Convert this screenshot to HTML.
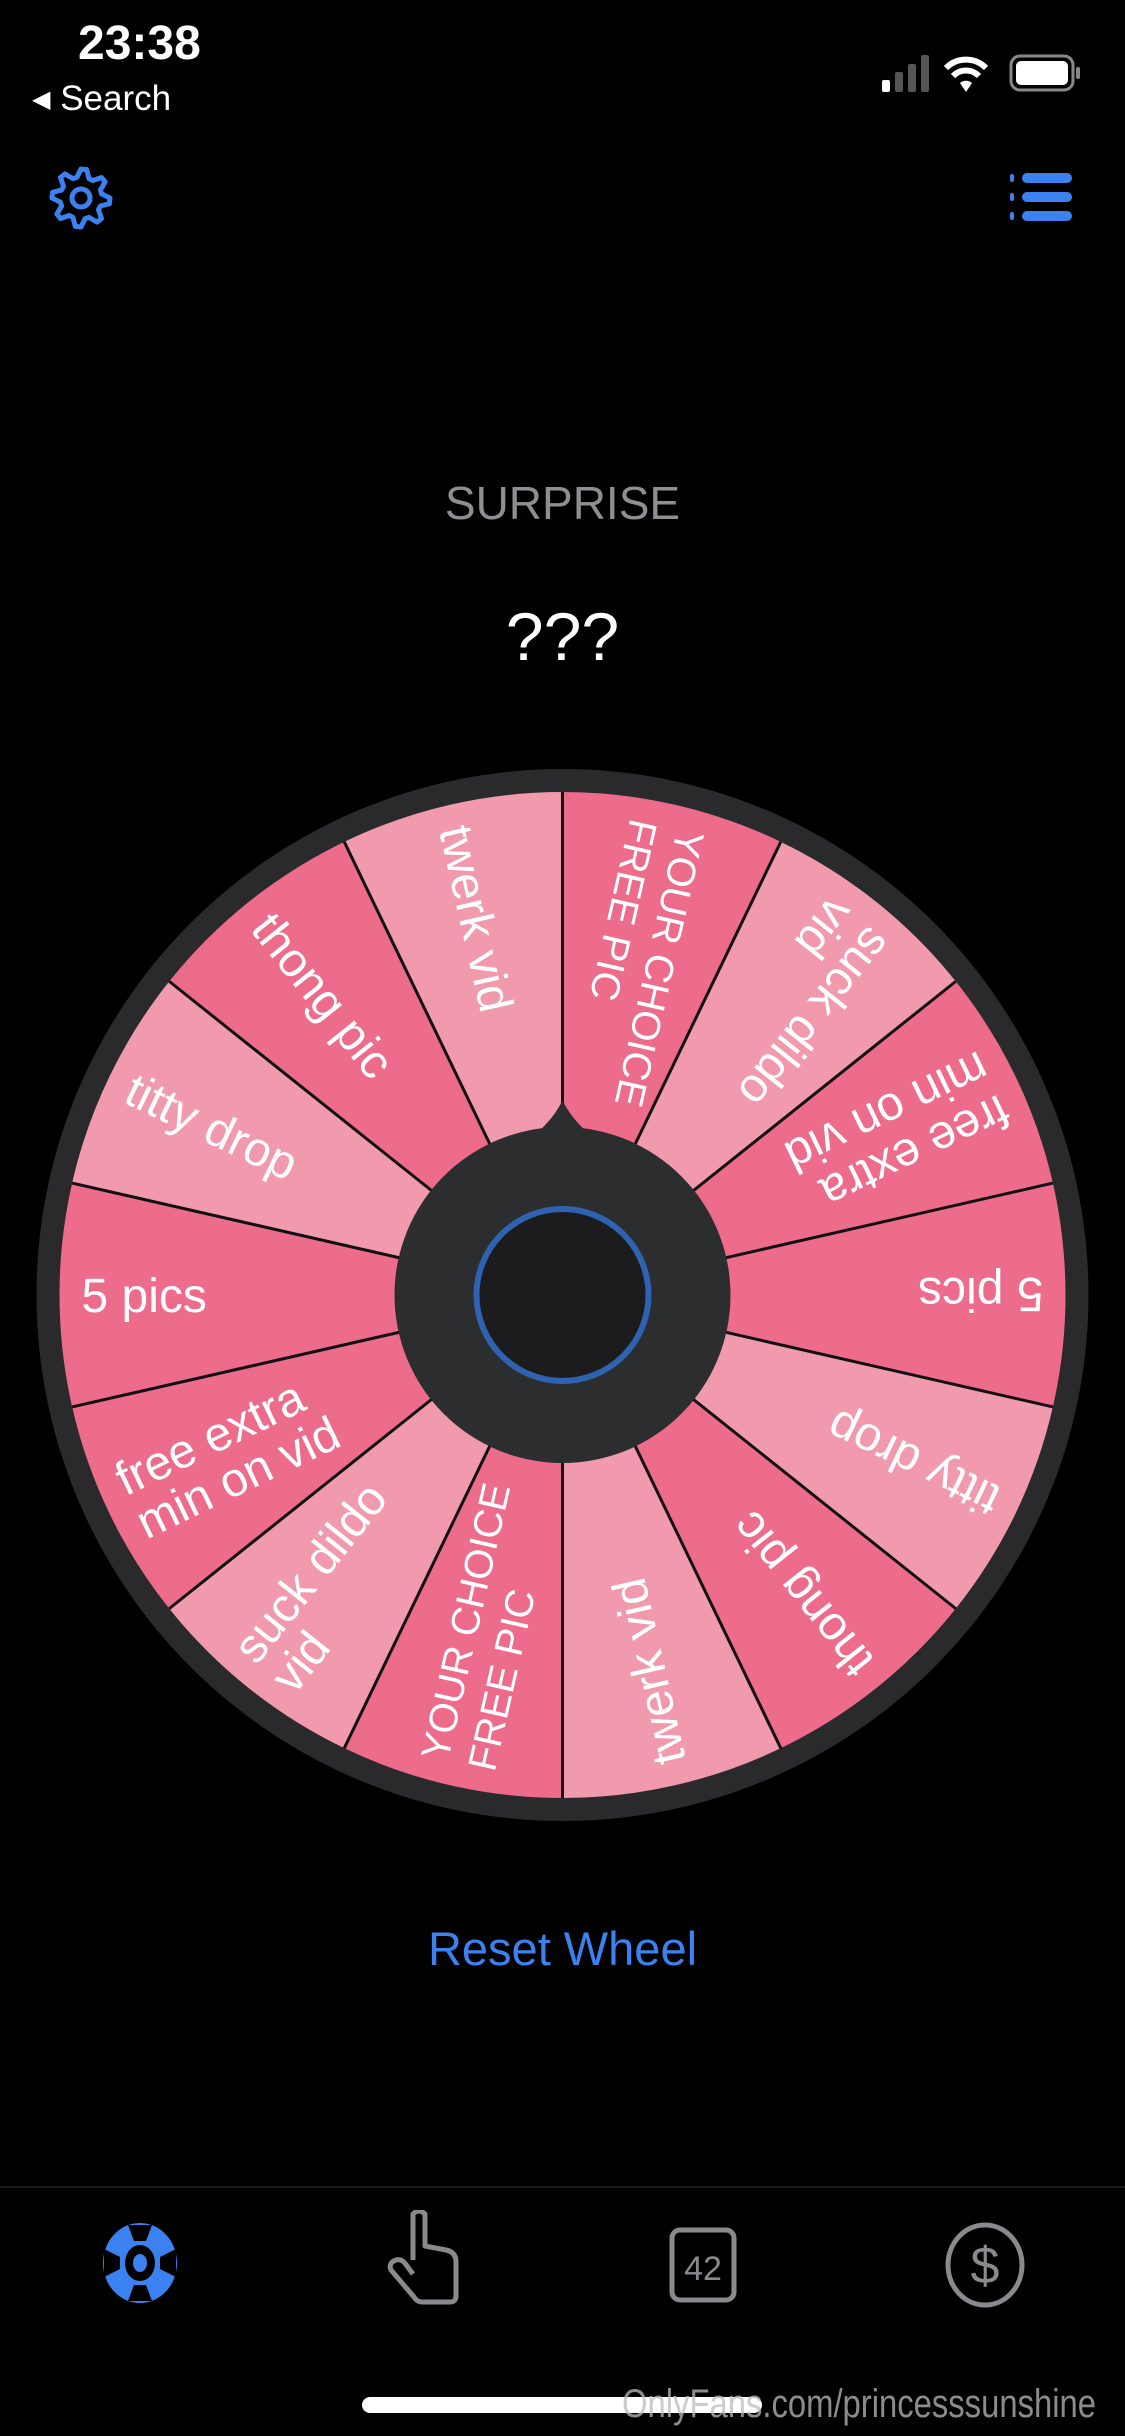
<!DOCTYPE html>
<html><head><meta charset="utf-8">
<style>
html,body{margin:0;padding:0;background:#000;}
body{width:1125px;height:2436px;position:relative;overflow:hidden;font-family:"Liberation Sans",sans-serif;}
.abs{position:absolute;}
</style></head>
<body>
<div class="abs" style="left:78px;top:16px;color:#fff;font-size:48px;font-weight:bold;">23:38</div>
<div class="abs" style="left:32px;top:79px;color:#fff;font-size:35px;"><span style="font-size:24px;position:relative;top:-3px;">◀</span> Search</div>
<svg class="abs" style="left:880px;top:50px" width="210" height="45" viewBox="0 0 210 45">
 <rect x="2" y="30" width="8" height="12" rx="2" fill="#fff"/>
 <rect x="15" y="22" width="8" height="20" rx="2" fill="#555"/>
 <rect x="28" y="14" width="8" height="28" rx="2" fill="#555"/>
 <rect x="41" y="5" width="8" height="37" rx="2" fill="#555"/>
 <path d="M66 18 A28 28 0 0 1 106 18" stroke="#fff" stroke-width="6" fill="none"/>
 <path d="M73 26 A18 18 0 0 1 99 26" stroke="#fff" stroke-width="6" fill="none"/>
 <path d="M80 33 L86 42 L92 33 A9 9 0 0 0 80 33Z" fill="#fff"/>
 <rect x="131" y="6" width="62" height="34" rx="9" fill="none" stroke="#888" stroke-width="3"/>
 <rect x="136" y="11" width="52" height="24" rx="5" fill="#fff"/>
 <rect x="196" y="17" width="4" height="12" rx="2" fill="#888"/>
</svg>
<svg class="abs" style="left:46px;top:162px" width="70" height="72" viewBox="-35 -36 70 72">
 <g fill="none" stroke="#3b82f0" stroke-width="5" stroke-linejoin="round">
 <path id="g" d=""/>
 <circle r="9"/>
 </g>
</svg>
<svg class="abs" style="left:1008px;top:170px" width="66" height="56" viewBox="0 0 66 56">
 <g fill="#3b82f0"><rect x="2" y="4" width="4" height="8" rx="2"/><rect x="14" y="3" width="50" height="10" rx="5"/>
 <rect x="2" y="23" width="4" height="8" rx="2"/><rect x="14" y="22" width="50" height="10" rx="5"/>
 <rect x="2" y="42" width="4" height="8" rx="2"/><rect x="14" y="41" width="50" height="10" rx="5"/></g>
</svg>
<div class="abs" style="left:0;width:1125px;top:476px;text-align:center;color:#8e8e93;font-size:46px;">SURPRISE</div>
<div class="abs" style="left:0;width:1125px;top:598px;text-align:center;color:#fff;font-size:68px;">???</div>

<svg id="wheel" class="abs" style="left:0;top:0" width="1125" height="2000"></svg>

<div class="abs" style="left:0;width:1125px;top:1921px;text-align:center;color:#3b82f0;font-size:47px;">Reset Wheel</div>
<div class="abs" style="left:0;top:2186px;width:1125px;height:2px;background:#1c1c1e;"></div>
<svg class="abs" style="left:0;top:2210px" width="1125" height="110" viewBox="0 0 1125 110">
 <g transform="translate(140,53)">
  <ellipse rx="37" ry="40" fill="#3b82f0"/>
  <g fill="#000">
   <path d="M-12 -38 L12 -38 L6 -22 L-6 -22Z"/>
   <path d="M-12 38 L12 38 L6 22 L-6 22Z"/>
   <path d="M-36 -14 L-36 14 L-20 6 L-20 -6Z"/>
   <path d="M36 -14 L36 14 L20 6 L20 -6Z"/>
   <ellipse rx="15" ry="18"/>
  </g>
  <ellipse rx="7" ry="9" fill="#3b82f0"/>
 </g>
 <path d="M413 50 L413 4 Q419 -2 425 4 L425 36 L446 40 Q456 42 456 52 L456 86 Q456 92 450 92 L422 92 Q417 92 414 87 L391 60 Q388 53 396 50 Q402 48 407 56 L413 64" fill="none" stroke="#8a8a8e" stroke-width="5" stroke-linejoin="round"/>
 <rect x="672" y="20" width="62" height="70" rx="8" fill="none" stroke="#8a8a8e" stroke-width="5"/>
 <text x="703" y="70" text-anchor="middle" fill="#8a8a8e" font-size="34" font-family="Liberation Sans">42</text>
 <ellipse cx="985" cy="55" rx="37" ry="40" fill="none" stroke="#8a8a8e" stroke-width="5"/>
 <text x="985" y="73" text-anchor="middle" fill="#8a8a8e" font-size="52" font-family="Liberation Sans">$</text>
</svg>
<div class="abs" style="left:362px;top:2397px;width:400px;height:16px;border-radius:8px;background:#fff;"></div>
<div class="abs" style="left:622px;top:2382px;color:#bbb;opacity:.75;font-size:40px;white-space:nowrap;transform-origin:0 0;transform:scaleX(0.82);">OnlyFans.com/princesssunshine</div>

<script>
(function(){var d="",n=8,ro=29,ri=21;for(var i=0;i<n*4;i++){var a=(i/(n*4))*2*Math.PI-Math.PI/2;var r=(i%4<2)?ro:ri;var x=Math.cos(a)*r,y=Math.sin(a)*r;d+=(i?"L":"M")+x.toFixed(1)+" "+y.toFixed(1);}document.getElementById("g").setAttribute("d",d+"Z");})();
var W=document.getElementById("wheel");
var cx=562.5,cy=1295,R=503;
var items=[["YOUR CHOICE","FREE PIC",0],["suck dildo","vid",1],["free extra","min on vid",0],["5 pics","",0],["titty drop","",1],["thong pic","",0],["twerk vid","",1],
["YOUR CHOICE","FREE PIC",0],["suck dildo","vid",1],["free extra","min on vid",0],["5 pics","",0],["titty drop","",1],["thong pic","",0],["twerk vid","",1]];
var h='<circle cx="'+cx+'" cy="'+cy+'" r="526" fill="#2a2a2c"/>';
var N=14,st=360/N;
function pt(deg,r){var a=deg*Math.PI/180;return [cx+Math.sin(a)*r,cy-Math.cos(a)*r];}
for(var i=0;i<N;i++){var a0=i*st,a1=(i+1)*st,p0=pt(a0,R),p1=pt(a1,R);
h+='<path d="M'+cx+' '+cy+'L'+p0[0]+' '+p0[1]+'A'+R+' '+R+' 0 0 1 '+p1[0]+' '+p1[1]+'Z" fill="'+(items[i][2]?'#F19AAE':'#ED6B8B')+'"/>';}
for(var i=0;i<N;i++){var p=pt(i*st,R);h+='<line x1="'+cx+'" y1="'+cy+'" x2="'+p[0]+'" y2="'+p[1]+'" stroke="#111" stroke-width="3"/>';}
for(var i=0;i<N;i++){var th=i*st+st/2,rot=th+90,it=items[i];
h+='<g transform="rotate('+rot+' '+cx+' '+cy+')" fill="#fff" font-size="48" font-family="Liberation Sans">';
var x=cx-R+22;
var fs=(it[0]=="YOUR CHOICE"?' font-size="40"':'');
if(it[1]){h+='<text x="'+x+'" y="'+(cy-8)+'"'+fs+'>'+it[0]+'</text><text x="'+x+'" y="'+(cy+40)+'"'+fs+'>'+it[1]+'</text>';}
else h+='<text x="'+x+'" y="'+(cy+17)+'">'+it[0]+'</text>';
h+='</g>';}
h+='<path d="M'+(cx-28)+' 1135 Q'+(cx-8)+' 1118 '+cx+' 1100 Q'+(cx+8)+' 1118 '+(cx+28)+' 1135Z" fill="#2c2d2f"/>';
h+='<circle cx="'+cx+'" cy="'+cy+'" r="168" fill="#2c2d2f"/>';
h+='<circle cx="'+cx+'" cy="'+cy+'" r="86" fill="#1c1c1e" stroke="#2f62b0" stroke-width="6"/>';
W.innerHTML=h;
</script>
</body></html>
